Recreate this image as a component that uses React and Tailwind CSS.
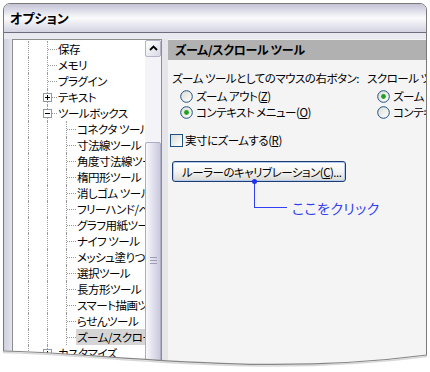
import React from 'react';

const treeItems = [
  { label: '保存', level: 1 },
  { label: 'メモリ', level: 1 },
  { label: 'プラグイン', level: 1 },
  { label: 'テキスト', level: 1, box: 'plus' },
  { label: 'ツールボックス', level: 1, box: 'minus' },
  { label: 'コネクタ ツール', level: 2 },
  { label: '寸法線ツール', level: 2 },
  { label: '角度寸法線ツール', level: 2 },
  { label: '楕円形ツール', level: 2 },
  { label: '消しゴム ツール', level: 2 },
  { label: 'フリーハンド/ベジエ ツール', level: 2 },
  { label: 'グラフ用紙ツール', level: 2 },
  { label: 'ナイフ ツール', level: 2 },
  { label: 'メッシュ塗りつぶしツール', level: 2 },
  { label: '選択ツール', level: 2 },
  { label: '長方形ツール', level: 2 },
  { label: 'スマート描画ツール', level: 2 },
  { label: 'らせんツール', level: 2 },
  { label: 'ズーム/スクロール ツール', level: 2, selected: true },
  { label: 'カスタマイズ', level: 1, box: 'plus' },
];

const Guide = () => (
  <div className="flex w-[19px] shrink-0">
    <div className="w-[9px]" />
    <div className="border-l border-dotted border-[#9a9a9a]" />
  </div>
);

const Branch = ({ box }) => (
  <div className="relative flex w-[19px] shrink-0">
    <div className="w-[9px]" />
    <div className="flex flex-1 items-center border-l border-dotted border-[#9a9a9a]">
      <div className="w-full border-t border-dotted border-[#9a9a9a]" />
    </div>
    {box && (
      <svg width="9" height="9" className="absolute left-[5px] top-[4px]">
        <rect x="0.5" y="0.5" width="8" height="8" fill="#fff" stroke="#8c9aa8" />
        <path d="M2 4.5h5" stroke="#000" />
        {box === 'plus' && <path d="M4.5 2v5" stroke="#000" />}
      </svg>
    )}
  </div>
);

const TreeRow = ({ item }) => (
  <div className="flex h-4 items-stretch pl-[6px]">
    <Guide />
    {item.level === 1 ? <Branch box={item.box} /> : <Guide />}
    {item.level === 2 && <Branch />}
    <div className={`flex items-center whitespace-nowrap pl-px pr-1 ${item.selected ? 'bg-[#d5d5d5]' : ''}`}>
      {item.label}
    </div>
  </div>
);

const Radio = ({ checked }) => (
  <svg width="13" height="13" className="shrink-0">
    <defs>
      <linearGradient id="rg" x1="0" y1="0" x2="1" y2="1">
        <stop offset="0" stopColor="#dcdcd4" />
        <stop offset="1" stopColor="#ffffff" />
      </linearGradient>
    </defs>
    <circle cx="6.5" cy="6.5" r="5.8" fill="url(#rg)" stroke="#1c5180" />
    {checked && <circle cx="6.5" cy="6.5" r="2.4" fill="#21a121" />}
  </svg>
);

const RadioRow = ({ checked, children }) => (
  <div className="flex h-4 items-center gap-[3px] whitespace-nowrap">
    <Radio checked={checked} />
    <span>{children}</span>
  </div>
);

export default function App() {
  return (
    <div className="relative h-[372px] w-[430px] overflow-hidden bg-white font-['Noto_Sans_CJK_JP',sans-serif] text-[11.5px] leading-4 tracking-[-0.5px] text-black [font-feature-settings:'palt']">
      {/* Window */}
      <div className="ml-[3px] mt-[3px] h-[400px] w-[424px] overflow-hidden rounded-t-[7px] border border-[#7a7a7a] bg-[#ebebf1]">
        {/* Title bar */}
        <div className="flex h-[28px] items-center bg-gradient-to-b from-[#c3c3d6] via-[#fbfbfd] to-[#d3d3e2] pl-[6px] text-[13px] font-bold tracking-normal">
          オプション
        </div>
        <div className="h-px bg-[#6c6c7c]" />
        <div className="h-[6px] bg-[#e9e9f1]" />

        {/* Body */}
        <div className="flex">
          <div className="w-[8px] shrink-0 bg-gradient-to-r from-[#cfcfdf] to-[#e4e4ee]" />

          {/* Tree panel */}
          <div className="flex h-[340px] w-[150px] shrink-0 border-l border-r border-t border-[#8d8d8d] bg-white">
            <div className="w-[132px] shrink-0 overflow-hidden pt-px">
              {treeItems.map((item) => (
                <TreeRow key={item.label} item={item} />
              ))}
            </div>
            {/* Scrollbar */}
            <div className="flex w-[16px] shrink-0 flex-col bg-[#f4f4f8]">
              <div className="flex h-[17px] items-center justify-center rounded-[2px] border border-[#b4b4c6] bg-gradient-to-br from-white to-[#d9d9e8]">
                <svg width="9" height="6" viewBox="0 0 9 6">
                  <path d="M1 5 4.5 1.5 8 5" fill="none" stroke="#000" strokeWidth="1.8" />
                </svg>
              </div>
              <div className="h-[86px]" />
              <div className="flex h-[238px] flex-col items-center justify-center gap-[2px] rounded-[2px] border border-[#acacc2] bg-gradient-to-r from-[#f8f8fc] to-[#c9c9dd]">
                <div className="h-px w-[7px] bg-[#9c9cb4]" />
                <div className="h-px w-[7px] bg-[#9c9cb4]" />
                <div className="h-px w-[7px] bg-[#9c9cb4]" />
              </div>
            </div>
          </div>

          <div className="w-[6px] shrink-0 bg-[#e6e6ea]" />

          {/* Right panel */}
          <div className="flex w-[258px] shrink-0 flex-col overflow-hidden bg-[#f4f4f4]">
            <div className="mt-px flex h-[20px] items-center whitespace-nowrap bg-[#b1b1b1] pl-[7px] text-[12px] font-bold tracking-[-0.3px]">
              ズーム/スクロール ツール
            </div>

            <div className="flex flex-col pl-[4px] pt-[10px]">
              <div className="flex">
                <div className="w-[195px] shrink-0">
                  <div className="h-4 whitespace-nowrap">ズーム ツールとしてのマウスの右ボタン:</div>
                  <div className="mt-[2px] pl-[8px]">
                    <RadioRow>
                      ズーム アウト(<u>Z</u>)
                    </RadioRow>
                    <RadioRow checked>
                      コンテキスト メニュー(<u>O</u>)
                    </RadioRow>
                  </div>
                </div>
                <div>
                  <div className="h-4 whitespace-nowrap">スクロール ツールとしてのマウスの右ボタン:</div>
                  <div className="mt-[2px] pl-[10px]">
                    <RadioRow checked>ズーム ツール(<u>M</u>)</RadioRow>
                    <RadioRow>コンテキスト メニュー(<u>E</u>)</RadioRow>
                  </div>
                </div>
              </div>

              <div className="ml-[-2px] mt-[12px] flex h-4 items-center gap-[2px] whitespace-nowrap">
                <span className="h-[13px] w-[13px] border border-[#1c5180] bg-gradient-to-br from-[#dcdcd4] to-white" />
                <span>
                  実寸にズームする(<u>R</u>)
                </span>
              </div>

              <div className="mt-[13px] flex h-[21px] w-[174px] items-center whitespace-nowrap rounded-[3px] border border-[#1e3c70] bg-gradient-to-b from-white via-[#f4f4f2] to-[#d9d9d6] pl-[9px] shadow-[inset_0_0_0_1px_#b4cbee]">
                ルーラーのキャリブレーション(<u>C</u>)...
              </div>

              {/* Callout */}
              <div className="flex items-end pl-[82px]">
                <div className="relative h-[26px] w-[33px] border-b border-l border-[#3040f2]">
                  <span className="absolute -left-[3px] -top-[3px] h-[5px] w-[5px] rounded-full bg-[#2030f0]" />
                </div>
                <span className="mb-[-9px] ml-[5px] whitespace-nowrap text-[14px] leading-[18px] tracking-[0.4px] text-[#3442ee]">ここをクリック</span>
              </div>
            </div>
          </div>
        </div>
      </div>

      {/* Curled bottom edge */}
      <svg width="430" height="372" className="pointer-events-none absolute left-0 top-0">
        <path d="M0 351 L3 351 C 100 352, 250 378, 427 355 L430 355 L430 372 L0 372 Z" fill="#fff" />
        <path d="M3 352.5 C 100 353.5, 250 379.5, 427 356.5" fill="none" stroke="#d8d8d8" strokeWidth="1.5" />
        <path d="M3 351 C 100 352, 250 378, 427 355" fill="none" stroke="#858585" strokeWidth="1.2" />
      </svg>
    </div>
  );
}
